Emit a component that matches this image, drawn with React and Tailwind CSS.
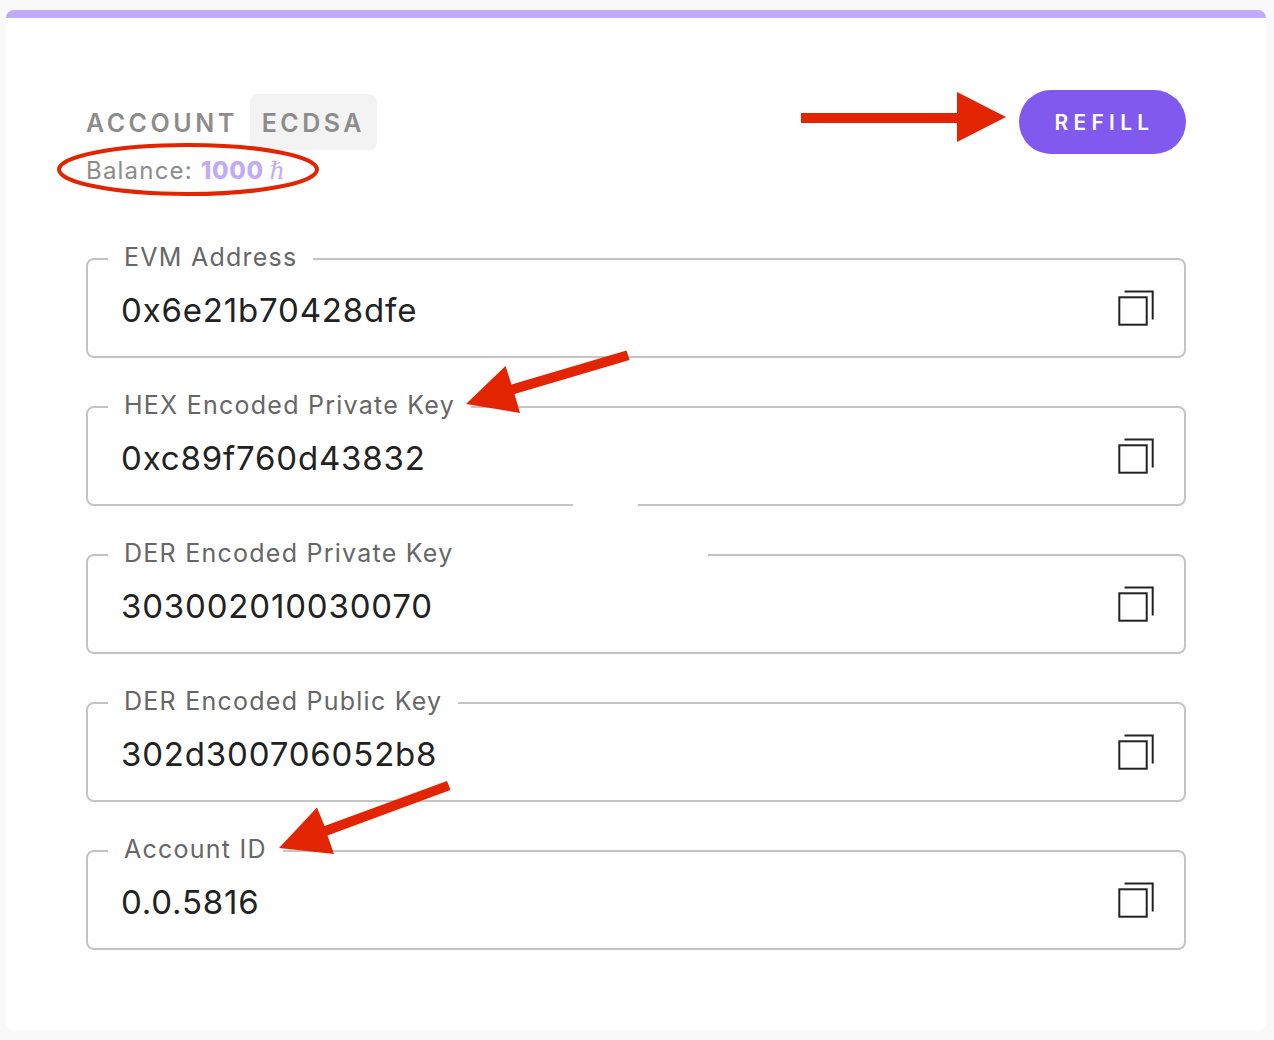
const fields = [
  { id: "evm-address", label: "EVM Address", value: "0x6e21b70428dfe" },
  { id: "hex-private-key", label: "HEX Encoded Private Key", value: "0xc89f760d43832", brokenBottom: true, arrow: "hex" },
  { id: "der-private-key", label: "DER Encoded Private Key", value: "303002010030070", wideNotch: true },
  { id: "der-public-key", label: "DER Encoded Public Key", value: "302d300706052b8" },
  { id: "account-id", label: "Account ID", value: "0.0.5816", arrow: "account" },
];

function CopyIcon() {
  return (
    <svg width="36" height="36" viewBox="0 0 36 36" fill="none" stroke="#222" strokeWidth="2" aria-hidden="true">
      <rect x="1.3" y="7.3" width="27.4" height="27.4" />
      <path d="M6.5 1.4H34.7V29.5" />
    </svg>
  );
}

function HexArrow() {
  return (
    <svg className="pointer-events-none absolute -top-[75px] left-[376px]" width="170" height="68" viewBox="464 348 170 68" fill="#e22400" aria-hidden="true">
      <path d="M466 404L505.500 366L511.500 384.500L626.500 350.500L629.500 360L514.500 394L520 413Z" />
    </svg>
  );
}

function AccountArrow() {
  return (
    <svg className="pointer-events-none absolute -top-[91px] left-[190px]" width="175" height="80" viewBox="278 776 175 80" fill="#e22400" aria-hidden="true">
      <path d="M279 848L317 807.500L324.500 826L447 781L450.500 790L327.500 835.500L334 854Z" />
    </svg>
  );
}

function Field({ id, label, value, brokenBottom, wideNotch, arrow }) {
  return (
    <fieldset className="relative min-w-0 rounded-lg border-2 border-[#c4c4c4] pr-[30px] pb-4 pl-[33px]">
      <legend
        className={
          "-ml-[13px] px-4 pb-1 text-[25px] leading-7 tracking-wider text-[#666] " + (wideNotch ? "w-[600px]" : "")
        }
      >
        <label htmlFor={id}>{label}</label>
      </legend>
      <div className="flex h-[65px] items-center justify-between">
        <input
          id={id}
          readOnly
          defaultValue={value}
          className="min-w-0 flex-1 bg-transparent pt-1 text-[33px] leading-10 tracking-wide text-[#222] outline-none"
        />
        <button type="button" aria-label={"Copy " + label}>
          <CopyIcon />
        </button>
      </div>
      {brokenBottom && <span className="absolute -bottom-0.5 left-[485px] h-0.5 w-[65px] bg-white" />}
      {arrow === "hex" && <HexArrow />}
      {arrow === "account" && <AccountArrow />}
    </fieldset>
  );
}

export default function App() {
  return (
    <div className="min-h-screen bg-[#f9f9f9] pt-2.5 pr-2 pb-2.5 pl-1.5 font-['Inter',sans-serif]">
      <main className="overflow-hidden rounded-lg bg-white">
        <div className="h-2 bg-[#c0abf7]" />
        <div className="px-20 pt-[72px] pb-20">
          <header className="flex items-start justify-between">
            <div className="relative pt-1">
              <div className="flex items-center gap-3 text-[25px] leading-[54px] font-semibold tracking-[0.14em] text-[#8c8c8c]">
                <h1 className="pt-0.5">ACCOUNT</h1>
                <span className="rounded-lg bg-[#f3f3f3] px-3 pt-0.5">ECDSA</span>
              </div>
              <p className="mt-[5px] text-2xl leading-8 tracking-wider text-[#8c8c8c]">
                Balance:{" "}
                <span className="font-extrabold tracking-wide text-[#c0abf7]">
                  1000 <span className="font-['Liberation_Serif','DejaVu_Serif',serif] font-normal italic">ℏ</span>
                </span>
              </p>
              <svg className="pointer-events-none absolute top-[50px] -left-8" width="268" height="60" viewBox="0 0 268 60" fill="none" aria-hidden="true">
                <ellipse cx="134" cy="29.500" rx="129" ry="24.500" stroke="#e22400" strokeWidth="4" />
              </svg>
            </div>
            <div className="flex items-start gap-3">
              <svg width="206" height="56" viewBox="801 90 206 56" fill="#e22400" aria-hidden="true">
                <path d="M801 113H957V92L1006 117L957 142V123H801Z" />
              </svg>
              <button
                type="button"
                className="h-16 w-[167px] rounded-full bg-[#8259ef] pt-0.5 pl-1 text-[21px] font-semibold tracking-[0.25em] text-white"
              >
                REFILL
              </button>
            </div>
          </header>
          <form className="mt-14 flex flex-col gap-[33px]">
            {fields.map((field) => (
              <Field key={field.id} {...field} />
            ))}
          </form>
        </div>
      </main>
    </div>
  );
}
